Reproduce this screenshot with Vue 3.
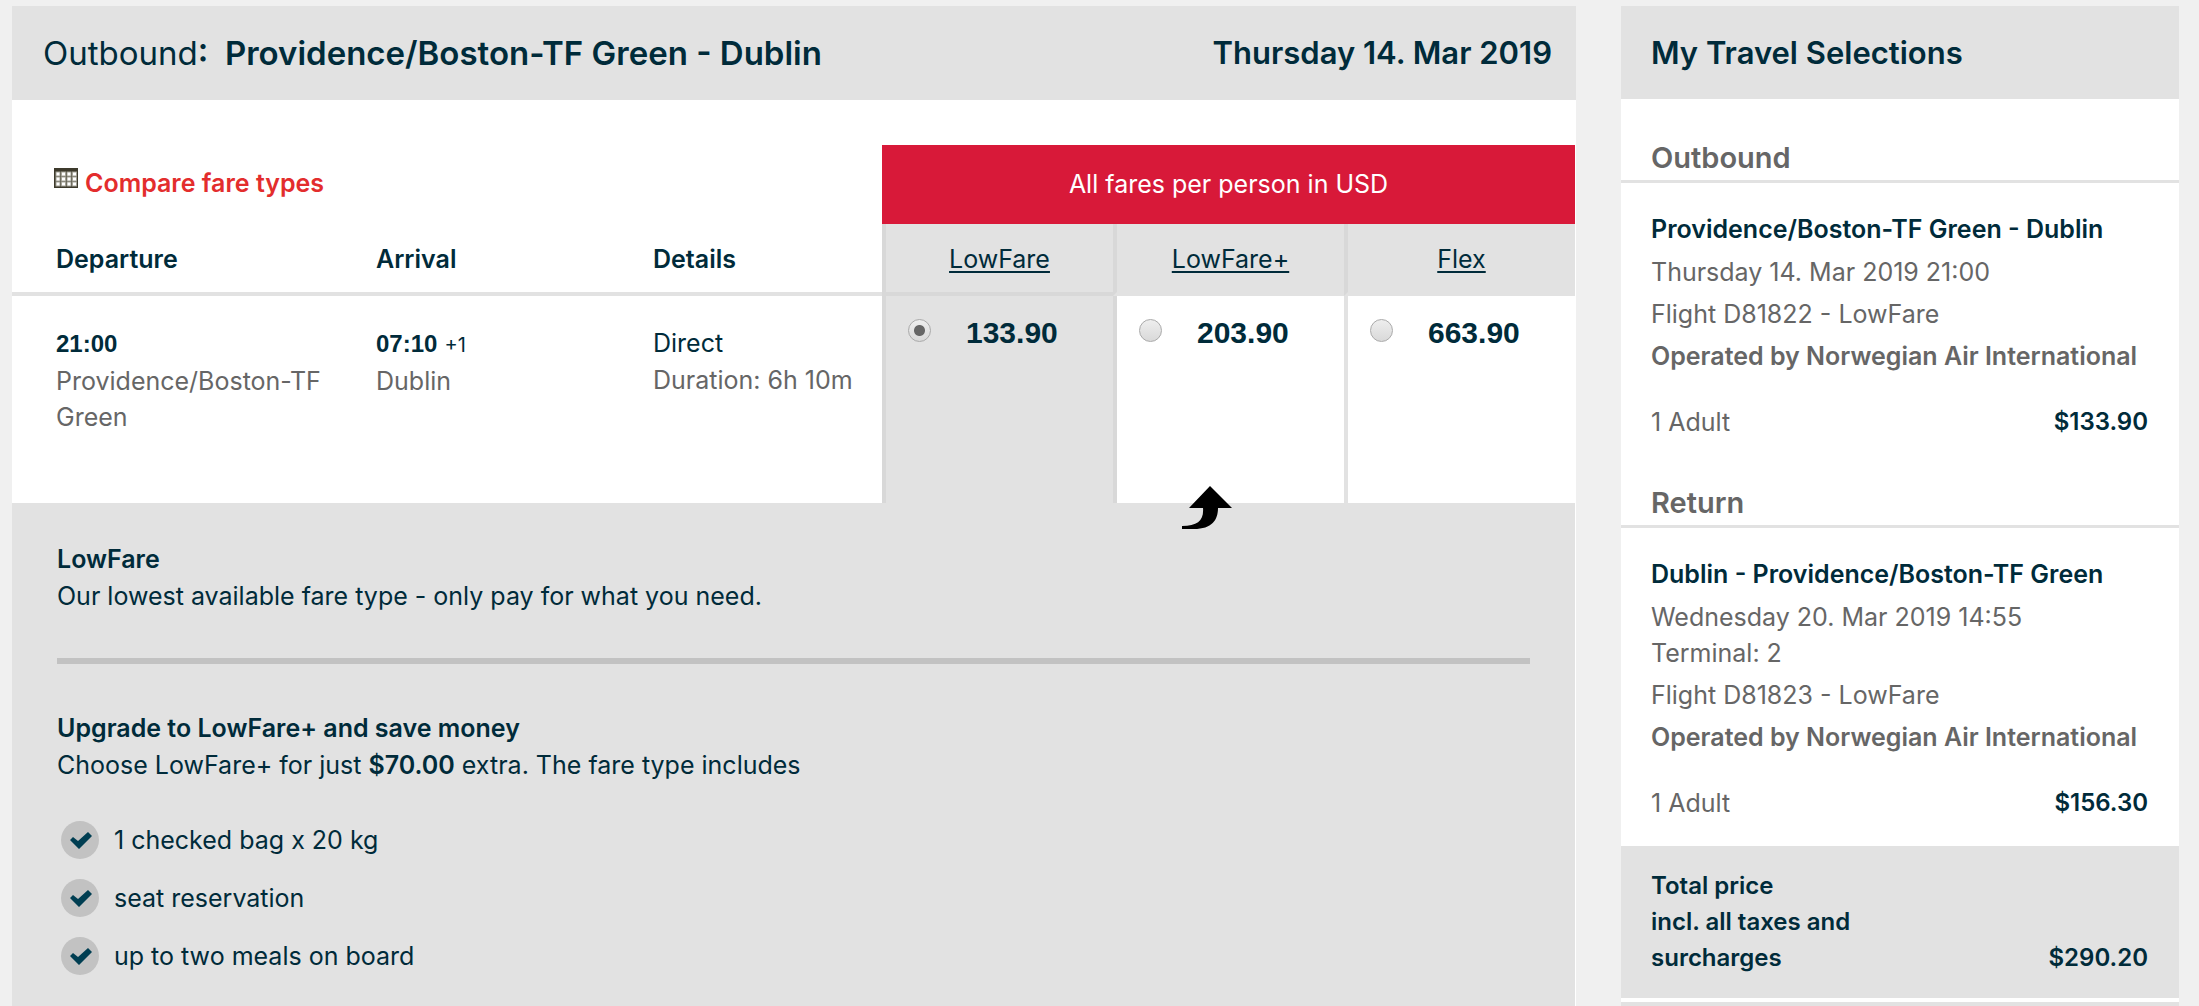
<script setup>
import { ref } from 'vue'

const fares = [
  { name: 'LowFare', price: '133.90' },
  { name: 'LowFare+', price: '203.90' },
  { name: 'Flex', price: '663.90' }
]
const selected = ref('LowFare')

const benefits = ['1 checked bag x 20 kg', 'seat reservation', 'up to two meals on board']

const trips = [
  {
    heading: 'Outbound',
    route: 'Providence/Boston-TF Green - Dublin',
    date: 'Thursday 14. Mar 2019 21:00',
    terminal: '',
    flight: 'Flight D81822 - LowFare',
    price: '$133.90'
  },
  {
    heading: 'Return',
    route: 'Dublin - Providence/Boston-TF Green',
    date: 'Wednesday 20. Mar 2019 14:55',
    terminal: 'Terminal: 2',
    flight: 'Flight D81823 - LowFare',
    price: '$156.30'
  }
]
</script>

<template>
  <div class="page">
    <main class="panel">
      <header class="bar">
        <h1><span class="light">Outbound</span>:&nbsp; Providence/Boston-TF Green - Dublin</h1>
        <h2>Thursday 14. Mar 2019</h2>
      </header>

      <table class="flights">
        <colgroup>
          <col>
          <col class="col-arrival">
          <col class="col-details">
          <col v-for="f in fares" :key="f.name" class="col-fare">
        </colgroup>
        <thead>
          <tr>
            <td colspan="3" class="compare">
              <a href="#compare">
                <svg width="24" height="20" viewBox="0 0 24 20" aria-hidden="true">
                  <rect width="24" height="20" fill="#3d3a2c" />
                  <g fill="#fff" stroke="#a5a397" stroke-width="1">
                    <template v-for="y in 3" :key="y">
                      <rect v-for="x in 4" :key="x" :x="x * 5.5 - 3.5" :y="y * 5 - 1" width="4" height="4" />
                    </template>
                  </g>
                </svg>
                <span>Compare fare types</span>
              </a>
            </td>
            <th colspan="3" class="currency">All fares per person in USD</th>
          </tr>
          <tr class="labels">
            <th>Departure</th>
            <th>Arrival</th>
            <th>Details</th>
            <th v-for="f in fares" :key="f.name" class="fare-head" :class="{ on: selected === f.name }">
              <a href="#fare">{{ f.name }}</a>
            </th>
          </tr>
        </thead>
        <tbody>
          <tr>
            <td class="info">
              <b class="time">21:00</b>
              <p>Providence/Boston-TF Green</p>
            </td>
            <td class="info">
              <span><b class="time">07:10</b> <small>+1</small></span>
              <p>Dublin</p>
            </td>
            <td class="info wide">
              <span>Direct</span>
              <p>Duration: 6h 10m</p>
            </td>
            <td v-for="(f, i) in fares" :key="f.name" class="fare" :class="{ on: selected === f.name }">
              <label>
                <input v-model="selected" type="radio" name="fare" :value="f.name">
                <span>{{ f.price }}</span>
              </label>
              <svg v-if="i === 1" class="arrow" width="50" height="43" viewBox="0 0 50 43" aria-hidden="true">
                <path d="M28 0 50 22H36C36 34 30 43 12 43H0V40C16 40 22 34 21 22H7Z" fill="#000" />
              </svg>
            </td>
          </tr>
        </tbody>
      </table>

      <section class="offer">
        <h3>LowFare</h3>
        <p>Our lowest available fare type - only pay for what you need.</p>
        <hr>
        <h3>Upgrade to LowFare+ and save money</h3>
        <p>Choose LowFare+ for just <b>$70.00</b> extra. The fare type includes</p>
        <ul>
          <li v-for="b in benefits" :key="b">
            <svg width="38" height="38" viewBox="0 0 38 38" aria-hidden="true">
              <circle cx="19" cy="19" r="19" fill="#c2c2c2" />
              <path d="M9 19 12 16 17 20 27 11 31 15 18 28Z" fill="#003e52" />
            </svg>
            <span>{{ b }}</span>
          </li>
        </ul>
      </section>
    </main>

    <aside class="panel">
      <header class="bar side-bar"><h2>My Travel Selections</h2></header>
      <section v-for="t in trips" :key="t.heading" class="trip">
        <h3>{{ t.heading }}</h3>
        <div class="trip-body">
          <h4>{{ t.route }}</h4>
          <p>{{ t.date }}<template v-if="t.terminal"><br>{{ t.terminal }}</template></p>
          <p>{{ t.flight }}</p>
          <p><b>Operated by Norwegian Air International</b></p>
          <div class="line"><span>1 Adult</span><strong>{{ t.price }}</strong></div>
        </div>
      </section>
      <div class="total">
        <strong>Total price<br>incl. all taxes and<br>surcharges</strong>
        <strong>$290.20</strong>
      </div>
      <div class="rest"></div>
    </aside>
  </div>
</template>

<style>
body {
  margin: 0;
  background: #f0f0f0;
}
</style>

<style scoped>
.page {
  box-sizing: border-box;
  min-height: 100vh;
  padding: 6px 20px 0 12px;
  display: grid;
  grid-template-columns: minmax(0, 1fr) 558px;
  gap: 45px;
  font: 25px/36px Inter, "Liberation Sans", sans-serif;
  color: #002b3a;
}
h1, h2, h3, h4, p, ul {
  margin: 0;
  padding: 0;
  font-size: inherit;
}
h1, h2, h3, h4, th, b, strong {
  font-weight: 600;
}
.panel {
  background: #fff;
  display: flex;
  flex-direction: column;
}
.bar {
  box-sizing: border-box;
  height: 94px;
  padding: 0 24px 0 31px;
  background: #e2e2e2;
  display: flex;
  align-items: center;
  justify-content: space-between;
  line-height: 40px;
}
.bar h1 {
  font-size: 33px;
}
.bar h2 {
  font-size: 31px;
}
.side-bar {
  height: 93px;
  margin-bottom: 21px;
  padding-left: 30px;
}
.light {
  font-weight: 400;
}

.flights {
  margin: 45px 1px 0 0;
  table-layout: fixed;
  border-spacing: 0;
  text-align: left;
}
.col-arrival {
  width: 277px;
}
.col-details {
  width: 229px;
}
.col-fare {
  width: 231px;
}
.flights th,
.flights td {
  padding: 0;
}
.flights .compare {
  padding: 0 0 4px 42px;
}
.compare a {
  display: flex;
  gap: 7px;
  color: #e32d2d;
  font-weight: 600;
  text-decoration: none;
}
.compare svg {
  margin-top: 3px;
}
.flights .currency {
  height: 77px;
  padding-bottom: 2px;
  background: #d81939;
  color: #fff;
  font-weight: 400;
  text-align: center;
}
.flights .labels th {
  height: 66px;
  padding-top: 2px;
  border-bottom: 4px solid #e2e2e2;
}
.flights .labels th:first-child,
.flights .info:first-child {
  padding-left: 44px;
}
.flights .labels .fare-head {
  background: #e2e2e2;
  border-left: 4px solid #d8d8d8;
  font-weight: 400;
  text-align: center;
}
.flights .labels .on {
  border-bottom-color: #d8d8d8;
}
.fare-head a {
  color: inherit;
  text-decoration-thickness: 2px;
  text-underline-offset: 3px;
}
.flights .info {
  height: 178px;
  padding-top: 29px;
  padding-right: 40px;
  vertical-align: top;
}
.flights .wide {
  padding-right: 0;
}
.info p {
  margin-top: 1px;
  color: #666;
}
.time {
  font: 700 24px/36px "Liberation Sans", sans-serif;
}
.info small {
  font-size: 20px;
  line-height: 20px;
}
.fare {
  position: relative;
  border-left: 4px solid #e2e2e2;
  vertical-align: top;
}
.fare.on,
.fare.on + .fare {
  border-left-color: #d8d8d8;
}
.fare.on {
  background: #e2e2e2;
}
.fare label {
  display: flex;
  align-items: center;
  gap: 35px;
  margin: 17px 0 0 22px;
  font: 700 30px/40px "Liberation Sans", sans-serif;
}
.fare input {
  appearance: none;
  box-sizing: border-box;
  width: 23px;
  height: 23px;
  margin: 0 0 6px;
  border: 1px solid #aaa;
  border-radius: 50%;
  background: linear-gradient(#eee, #d9d9d9);
}
.fare input:checked {
  background: radial-gradient(circle, #666 5px, transparent 6px), linear-gradient(#eee, #d9d9d9);
}
.arrow {
  position: absolute;
  left: 65px;
  bottom: -26px;
  z-index: 1;
}

.offer {
  flex: 1;
  margin-right: 1px;
  padding: 38px 45px 0;
  background: #e2e2e2;
}
.offer p {
  margin-top: 1px;
}
.offer hr {
  height: 6px;
  margin: 44px 0 46px;
  border: 0;
  background: #c2c2c2;
}
.offer ul {
  margin-top: 38px;
  list-style: none;
  display: grid;
  gap: 20px;
}
.offer li {
  display: flex;
  align-items: center;
  gap: 15px;
  padding-left: 4px;
}

.trip h3 {
  padding: 19px 30px 3px;
  border-bottom: 3px solid #e2e2e2;
  font-size: 29px;
  line-height: 38px;
  color: #666;
}
.trip-body {
  padding: 28px 31px 25px 30px;
  color: #666;
}
.trip h4 {
  margin-bottom: 7px;
}
.trip h4,
.line strong {
  color: #002b3a;
}
.trip p {
  margin-bottom: 6px;
}
.line {
  display: flex;
  justify-content: space-between;
  margin-top: 30px;
}
.line strong {
  font-size: 24px;
}
.total {
  display: flex;
  justify-content: space-between;
  align-items: flex-end;
  margin-bottom: 4px;
  padding: 22px 31px 22px 30px;
  background: #e2e2e2;
  font-size: 24px;
}
.rest {
  flex: 1;
  background: #e2e2e2;
}
</style>
